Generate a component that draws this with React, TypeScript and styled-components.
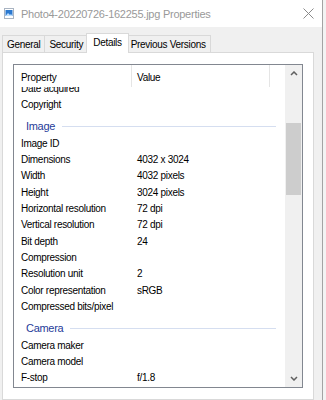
import React from "react";
import styled, { createGlobalStyle } from "styled-components";

const GlobalStyle = createGlobalStyle`
  html, body {
    margin: 0;
    padding: 0;
    background: #f3f3f3;
  }
  body {
    font-family: "Liberation Sans", Arial, sans-serif;
  }
`;

type Item =
  | { kind: "row"; name: string; value?: string }
  | { kind: "section"; name: string };

const items: Item[] = [
  { kind: "row", name: "Date acquired" },
  { kind: "row", name: "Copyright" },
  { kind: "section", name: "Image" },
  { kind: "row", name: "Image ID" },
  { kind: "row", name: "Dimensions", value: "4032 x 3024" },
  { kind: "row", name: "Width", value: "4032 pixels" },
  { kind: "row", name: "Height", value: "3024 pixels" },
  { kind: "row", name: "Horizontal resolution", value: "72 dpi" },
  { kind: "row", name: "Vertical resolution", value: "72 dpi" },
  { kind: "row", name: "Bit depth", value: "24" },
  { kind: "row", name: "Compression" },
  { kind: "row", name: "Resolution unit", value: "2" },
  { kind: "row", name: "Color representation", value: "sRGB" },
  { kind: "row", name: "Compressed bits/pixel" },
  { kind: "section", name: "Camera" },
  { kind: "row", name: "Camera maker" },
  { kind: "row", name: "Camera model" },
  { kind: "row", name: "F-stop", value: "f/1.8" },
];

const tabs = ["General", "Security", "Details", "Previous Versions"];

const FileIcon = () => (
  <svg width="10" height="11" viewBox="0 0 10 11">
    <rect x="0.5" y="0.5" width="9" height="10" fill="#fff" stroke="#a9b4c2" />
    <rect x="1.5" y="2" width="7" height="6" fill="#2b79d0" />
    <polygon points="1.5,8 4,5 6,7 7,6 8.5,8" fill="#bfe0ff" />
  </svg>
);

const CloseIcon = () => (
  <svg width="11" height="11" viewBox="0 0 11 11">
    <path d="M0.5 0.5 L10.5 10.5 M10.5 0.5 L0.5 10.5" stroke="#8a8a8a" strokeWidth="1" />
  </svg>
);

const Chevron = ({ down }: { down?: boolean }) => (
  <svg width="8" height="5" viewBox="0 0 8 5">
    <polyline
      points={down ? "1,1 4,4 7,1" : "1,4 4,1 7,4"}
      fill="none"
      stroke="#606060"
      strokeWidth="1.5"
    />
  </svg>
);

const App = () => (
  <>
    <GlobalStyle />
    <Window>
      <TitleBar>
        <FileIcon />
        <TitleText>Photo4-20220726-162255.jpg Properties</TitleText>
        <CloseIcon />
      </TitleBar>
      <TabStrip>
        {tabs.map((t) => (
          <Tab key={t} $active={t === "Details"}>
            {t}
          </Tab>
        ))}
      </TabStrip>
      <Panel>
        <ListBox>
          <Main>
            <Header>
              <HeaderCell $width={118} $pad={7}>Property</HeaderCell>
              <HeaderCell $width={138} $pad={5}>Value</HeaderCell>
            </Header>
            <Rows>
              <RowList $scroll={-6.5}>
                {items.map((it) =>
                  it.kind === "section" ? (
                    <Section key={it.name}>
                      {it.name}
                      <SectionLine />
                    </Section>
                  ) : (
                    <Row key={it.name}>
                      <NameCell>{it.name}</NameCell>
                      <ValueCell>{it.value}</ValueCell>
                    </Row>
                  )
                )}
              </RowList>
            </Rows>
          </Main>
          <ScrollBar>
            <ScrollButton>
              <Chevron />
            </ScrollButton>
            <Track>
              <Thumb $offset={41} $size={72} />
            </Track>
            <ScrollButton>
              <Chevron down />
            </ScrollButton>
          </ScrollBar>
        </ListBox>
      </Panel>
    </Window>
  </>
);

const Window = styled.div`
  width: 323px;
  height: 400px;
  box-sizing: border-box;
  border-right: 1px solid #a3a3a3;
  background: #f0f0f0;
  display: flex;
  flex-direction: column;
  overflow: hidden;
  font-size: 10px;
  letter-spacing: -0.3px;
  color: #000;
`;

const TitleBar = styled.div`
  height: 27px;
  flex-shrink: 0;
  background: #fff;
  display: flex;
  align-items: center;
  padding: 0 8px 0 4px;
  box-sizing: border-box;
`;

const TitleText = styled.span`
  flex: 1;
  margin-left: 7px;
  font-size: 11px;
  letter-spacing: -0.25px;
  color: #999;
  padding-top: 1px;
`;

const TabStrip = styled.div`
  display: flex;
  align-items: flex-end;
  height: 19px;
  margin-top: 6px;
  padding-left: 2px;
  flex-shrink: 0;
`;

const Tab = styled.div<{ $active?: boolean }>`
  box-sizing: border-box;
  height: ${(p) => (p.$active ? 20 : 17)}px;
  padding: 0 ${(p) => (p.$active ? 6 : 4)}px ${(p) => (p.$active ? 3 : 0)}px;
  margin: 0 ${(p) => (p.$active ? -2 : 0)}px ${(p) => (p.$active ? -1 : 0)}px
    ${(p) => (p.$active ? -2 : -1)}px;
  border: 1px solid #d9d9d9;
  border-bottom: none;
  background: ${(p) => (p.$active ? "#fff" : "#f0f0f0")};
  display: flex;
  align-items: center;
  white-space: nowrap;
  position: relative;
  z-index: ${(p) => (p.$active ? 2 : 1)};

  &:first-child {
    margin-left: 0;
  }
`;

const Panel = styled.div`
  margin-left: 2px;
  width: 312px;
  flex: 1;
  box-sizing: border-box;
  border: 1px solid #d9d9d9;
  background: #fff;
  padding: 11px 0 0 10px;
`;

const ListBox = styled.div`
  width: 290px;
  height: 324px;
  box-sizing: border-box;
  border: 1px solid #828790;
  display: flex;
  background: #fff;
`;

const Main = styled.div`
  flex: 1;
  display: flex;
  flex-direction: column;
  min-width: 0;
`;

const Header = styled.div`
  height: 22px;
  flex-shrink: 0;
  display: flex;
`;

const HeaderCell = styled.div<{ $width: number; $pad: number }>`
  width: ${(p) => p.$width}px;
  box-sizing: border-box;
  border-right: 1px solid #e5e5e5;
  padding: 5px 0 0 ${(p) => p.$pad}px;
  line-height: 16px;
`;

const Rows = styled.div`
  flex: 1;
  overflow: hidden;
`;

const RowList = styled.div<{ $scroll: number }>`
  margin-top: ${(p) => p.$scroll}px;
`;

const Row = styled.div`
  display: flex;
  height: 16.33px;
  line-height: 16.33px;
  white-space: nowrap;
`;

const NameCell = styled.div`
  width: 117px;
  flex-shrink: 0;
  box-sizing: border-box;
  padding-left: 7px;
  overflow: hidden;
`;

const ValueCell = styled.div`
  padding-left: 6px;
`;

const Section = styled.div`
  display: flex;
  align-items: center;
  height: 16.33px;
  line-height: 16.33px;
  padding: 5px 9px 1.2px 12px;
  font-size: 11px;
  color: #1f3c99;
`;

const SectionLine = styled.div`
  flex: 1;
  height: 1px;
  margin-left: 7px;
  background: #d5def0;
`;

const ScrollBar = styled.div`
  width: 17px;
  flex-shrink: 0;
  background: #f0f0f0;
  display: flex;
  flex-direction: column;
`;

const ScrollButton = styled.div`
  height: 17px;
  flex-shrink: 0;
  display: flex;
  align-items: center;
  justify-content: center;
`;

const Track = styled.div`
  flex: 1;
`;

const Thumb = styled.div<{ $offset: number; $size: number }>`
  margin: ${(p) => p.$offset}px 1px 0;
  height: ${(p) => p.$size}px;
  background: #cdcdcd;
`;

export default App;
